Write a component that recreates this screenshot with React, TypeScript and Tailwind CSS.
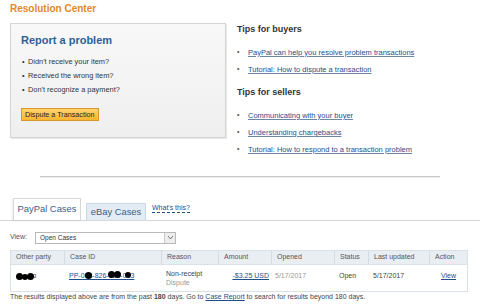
const BUYER_TIPS = [
  "PayPal can help you resolve problem transactions",
  "Tutorial: How to dispute a transaction",
];

const SELLER_TIPS = [
  "Communicating with your buyer",
  "Understanding chargebacks",
  "Tutorial: How to respond to a transaction problem",
];

const PROBLEMS = [
  "Didn't receive your item?",
  "Received the wrong item?",
  "Don't recognize a payment?",
];

const COLUMNS = [
  { label: "Other party", width: "w-[53px]" },
  { label: "Case ID", width: "w-[97px]" },
  { label: "Reason", width: "w-[57px]" },
  { label: "Amount", width: "w-[53px]" },
  { label: "Opened", width: "w-[63px]" },
  { label: "Status", width: "w-[34px]" },
  { label: "Last updated", width: "w-[61px]" },
  { label: "Action", width: "flex-1" },
];

function Redacted({ className }: { className?: string }) {
  return <span className={`inline-block rounded-full bg-black ${className ?? ""}`} />;
}

function TipLink({ text }: { text: string }) {
  return (
    <li className="flex items-center h-[17px]">
      <span className="w-[11px] text-[7px] text-[#555]">•</span>
      <a className="text-[7.5px] text-[#1f4e8c] underline decoration-[#6c86a8]">{text}</a>
    </li>
  );
}

export default function App() {
  return (
    <div className="w-[480px] h-[304px] overflow-hidden bg-white text-[#333] font-['Liberation_Sans',Arial,sans-serif]">
      <div className="px-[10px] pt-[3px]">
        <h1 className="text-[10px] font-bold text-[#e1892a] leading-[12px]">Resolution Center</h1>

        <div className="flex items-start h-[115px] mt-[8px]">
          {/* report box */}
          <div className="w-[216px] h-[115px] shrink-0 border border-[#d4d4d4] bg-gradient-to-b from-[#f8f8f8] to-[#efefef] shadow-[1px_1px_1px_rgba(0,0,0,0.08)] pl-[10px] pt-[10px]">
            <h2 className="text-[11px] font-bold text-[#2d5f95] leading-[12px]">Report a problem</h2>
            <ul className="mt-[11px] flex flex-col gap-[5px]">
              {PROBLEMS.map((p) => (
                <li key={p} className="flex items-center h-[9px] text-[7.4px] text-[#333]">
                  <span className="w-[7px] pl-[1px]">•</span>
                  {p}
                </li>
              ))}
            </ul>
            <button className="mt-[14px] h-[13px] px-[3px] text-[7.2px] leading-[11px] text-[#222] border border-[#d69a2c] bg-gradient-to-b from-[#fed56a] to-[#f8b52e]">
              Dispute a Transaction
            </button>
          </div>

          {/* tips */}
          <div className="ml-[11px]">
            <h3 className="text-[9px] font-bold text-[#333] leading-[12px]">Tips for buyers</h3>
            <ul className="mt-[9px]">
              {BUYER_TIPS.map((t) => (
                <TipLink key={t} text={t} />
              ))}
            </ul>
            <h3 className="text-[9px] font-bold text-[#333] leading-[12px] mt-[8px]">Tips for sellers</h3>
            <ul className="mt-[9px]">
              {SELLER_TIPS.map((t) => (
                <TipLink key={t} text={t} />
              ))}
            </ul>
          </div>
        </div>
      </div>

      <div className="mx-[40px] mt-[38px] h-[2px] border-t border-[#c8c8c8] border-b border-b-[#ececec]" />

      {/* tabs */}
      <div className="mt-[20px] flex items-end border-b border-[#d8d8d8] pl-[13px] h-[23px]">
        <div className="h-[22px] w-[68px] border border-b-0 border-[#d8d8d8] bg-white flex items-center justify-center text-[9.4px] text-[#3b5f8a] shadow-[-1px_1px_2px_rgba(0,0,0,0.08)]">
          PayPal Cases
        </div>
        <div className="ml-[5px] h-[17px] w-[60px] border border-b-0 border-[#c9d8e6] bg-[#e3ecf5] flex items-center justify-center text-[9.4px] text-[#3b5f8a]">
          eBay Cases
        </div>
        <a className="ml-[6px] mb-[7px] text-[7px] text-[#1f4e8c] border-b border-dashed border-[#1f4e8c] leading-[8px]">
          What's this?
        </a>
      </div>

      {/* view select */}
      <div className="flex items-center mt-[10px] pl-[10px] h-[13px]">
        <span className="text-[7px] text-[#555] w-[25px]">View:</span>
        <div className="w-[141px] h-[12px] border border-[#b8b8b8] bg-white flex items-center justify-between">
          <span className="pl-[4px] text-[6.5px] text-[#333]">Open Cases</span>
          <span className="w-[11px] h-[10px] border-l border-[#c8c8c8] bg-[#eeeeee] flex items-center justify-center">
            <svg width="7" height="5" viewBox="0 0 7 5">
              <path d="M1 1 L3.5 4 L6 1" fill="none" stroke="#777" strokeWidth="1" />
            </svg>
          </span>
        </div>
      </div>

      {/* cases table */}
      <div className="mx-[10px] mt-[6px] w-[458px] border border-[#d9e0e7]">
        <div className="flex h-[14px] bg-[#e9eef3] border-b border-[#d9e0e7]">
          {COLUMNS.map((c, i) => (
            <div
              key={c.label}
              className={`${c.width} flex items-center pl-[5px] text-[7px] text-[#555] ${i > 0 ? "border-l border-[#d3dbe3]" : ""}`}
            >
              {c.label}
            </div>
          ))}
        </div>
        <div className="flex h-[26px] bg-white text-[7px]">
          <div className="w-[53px] flex items-center pl-[5px] pb-[3px]">
            <Redacted className="w-[7px] h-[7px]" />
            <Redacted className="w-[6px] h-[6px] -ml-[1px]" />
            <Redacted className="w-[7px] h-[7px] -ml-[1px]" />
            <span className="text-[6px] -ml-[1px]">3</span>
          </div>
          <div className="w-[97px] flex items-center pl-[5px] pb-[3px]">
            <a className="relative text-[#1f4e8c] underline">
              PP-003-826-000-003
              <Redacted className="absolute left-[16px] top-[1px] w-[7px] h-[7px]" />
              <Redacted className="absolute left-[39px] top-[0px] w-[7px] h-[7px]" />
              <Redacted className="absolute left-[45px] top-[0px] w-[7px] h-[7px]" />
              <Redacted className="absolute left-[56px] top-[1px] w-[6px] h-[6px]" />
            </a>
          </div>
          <div className="w-[57px] flex flex-col justify-center pl-[5px] leading-[9px]">
            <span className="text-[#444]">Non-receipt</span>
            <span className="text-[#999]">Dispute</span>
          </div>
          <div className="w-[53px] flex items-center justify-end pr-[2px] pb-[3px]">
            <a className="text-[#1f4e8c] underline">-$3.25 USD</a>
          </div>
          <div className="w-[63px] flex items-center pl-[4px] pb-[3px] text-[#999]">5/17/2017</div>
          <div className="w-[34px] flex items-center pl-[5px] pb-[3px] text-[#444]">Open</div>
          <div className="w-[61px] flex items-center pl-[5px] pb-[3px] text-[#444]">5/17/2017</div>
          <div className="flex-1 flex items-center pl-[12px] pb-[3px]">
            <a className="text-[#1f4e8c] underline">View</a>
          </div>
        </div>
      </div>

      <p className="pl-[10px] text-[7px] text-[#444] leading-[9px]">
        The results displayed above are from the past <b>180</b> days. Go to{" "}
        <a className="text-[#1f4e8c] underline">Case Report</a> to search for results beyond 180 days.
      </p>
    </div>
  );
}
